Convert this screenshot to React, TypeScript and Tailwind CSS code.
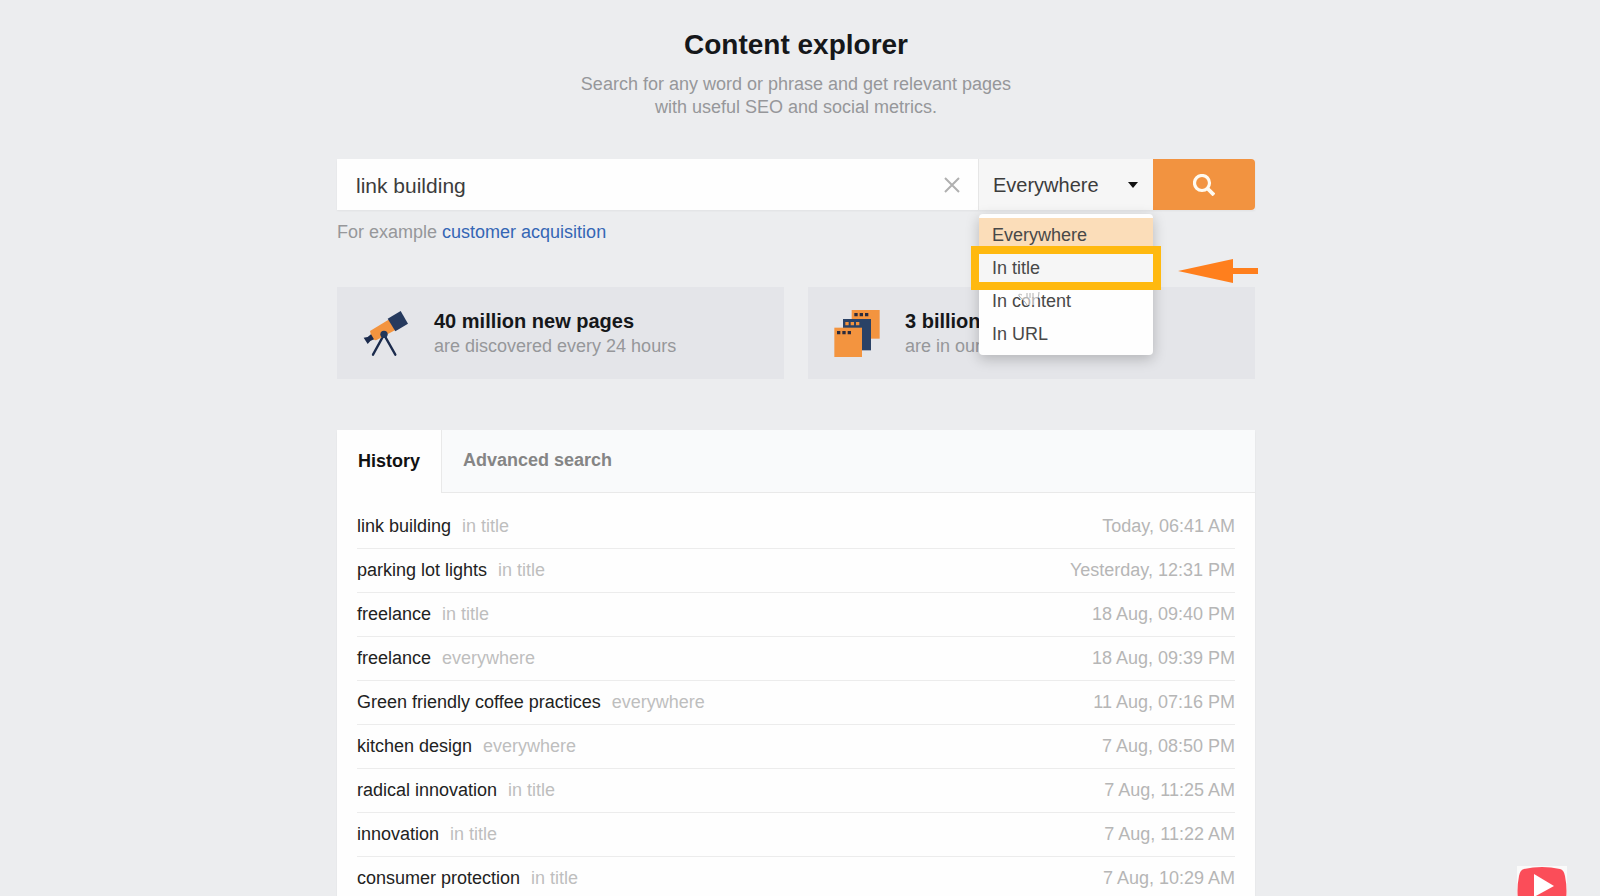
import { useState } from 'react'

const scopes = ['Everywhere', 'In title', 'In content', 'In URL']

const history = [
  { query: 'link building', scope: 'in title', date: 'Today, 06:41 AM' },
  { query: 'parking lot lights', scope: 'in title', date: 'Yesterday, 12:31 PM' },
  { query: 'freelance', scope: 'in title', date: '18 Aug, 09:40 PM' },
  { query: 'freelance', scope: 'everywhere', date: '18 Aug, 09:39 PM' },
  { query: 'Green friendly coffee practices', scope: 'everywhere', date: '11 Aug, 07:16 PM' },
  { query: 'kitchen design', scope: 'everywhere', date: '7 Aug, 08:50 PM' },
  { query: 'radical innovation', scope: 'in title', date: '7 Aug, 11:25 AM' },
  { query: 'innovation', scope: 'in title', date: '7 Aug, 11:22 AM' },
  { query: 'consumer protection', scope: 'in title', date: '7 Aug, 10:29 AM' },
]

function TelescopeIcon() {
  return (
    <svg viewBox="36 39 144 144" className="size-12 shrink-0" aria-hidden="true">
      <path d="M102 116 69 176M102 116l34 60" stroke="#1b2b4d" strokeWidth="7" strokeLinecap="round" />
      <path d="M60 105 118 70l18 32-56 30q-10 2-15-6z" fill="#f3943f" />
      <path d="M63 115 72 130 61 135 53 144 41 125 53 123z" fill="#1b2b4d" />
      <path d="m113 68 39-23 22 38-38 23z" fill="#263a5e" />
      <circle cx="102" cy="115" r="11" fill="#22375a" />
    </svg>
  )
}

function PagesIcon() {
  return (
    <svg viewBox="100 84 144 144" className="size-12 shrink-0" aria-hidden="true">
      <path d="M156 87h84v86h-84z" fill="#f3943f" />
      <path d="M164 96h10v10h-10zM180 96h10v10h-10zM196 96h10v10h-10z" fill="#2b2b3c" />
      <path d="M130 114h84v94h-84z" fill="#2a4266" />
      <path d="M137 123h10v10h-10zM153 123h10v10h-10zM169 123h10v10h-10z" fill="#f3943f" />
      <path d="M104 140h83v88h-83z" fill="#f3943f" />
      <path d="M112 150h10v10h-10zM128 150h10v10h-10zM144 150h10v10h-10z" fill="#2b2b3c" />
    </svg>
  )
}

function StatCard({ icon, title, text }: { icon: React.ReactNode; title: string; text: string }) {
  return (
    <div className="flex h-[92px] flex-1 items-center gap-6 bg-[#e4e5e9] pl-[25px]">
      {icon}
      <div className="min-w-0">
        <p className="text-xl leading-[26px] font-bold text-[#15171a]">{title}</p>
        <p className="text-lg leading-6 text-[#96979a]">{text}</p>
      </div>
    </div>
  )
}

export default function App() {
  const [query, setQuery] = useState('link building')
  const [scope, setScope] = useState('Everywhere')
  const [hovered, setHovered] = useState('In title')
  const [tab, setTab] = useState('History')

  return (
    <div className="relative h-screen overflow-hidden bg-[#ecedef] pr-2 font-['Liberation_Sans',Arial,sans-serif]">
      <main className="mx-auto w-full max-w-[918px]">
        <header className="pt-7 text-center">
          <h1 className="text-[28px] leading-[34px] font-bold text-[#15171a]">Content explorer</h1>
          <p className="mt-[11px] text-lg leading-[23px] text-[#96979a]">
            Search for any word or phrase and get relevant pages
            <br />
            with useful SEO and social metrics.
          </p>
        </header>

        <form className="relative mt-10 flex h-[51px] shadow-xs" onSubmit={(e) => e.preventDefault()}>
          <div className="flex flex-1 items-center bg-[#fefefe]">
            <input
              type="text"
              aria-label="Search query"
              value={query}
              onChange={(e) => setQuery(e.target.value)}
              className="h-full min-w-0 flex-1 bg-transparent pt-[2px] pl-[19px] text-[21px] text-[#3c3c3c] outline-none"
            />
            <button type="button" aria-label="Clear" onClick={() => setQuery('')} className="px-[18px]">
              <svg viewBox="0 0 16 16" className="size-4" stroke="#b0b0b0" strokeWidth="2" aria-hidden="true">
                <path d="m1 1 14 14M15 1 1 15" />
              </svg>
            </button>
          </div>

          <div className="relative w-[175px] border-l border-[#e6e6e6] bg-[#f6f6f6]">
            <select
              aria-label="Search scope"
              value={scope}
              onChange={(e) => setScope(e.target.value)}
              className="h-full w-full appearance-none bg-transparent pl-[14px] text-xl text-[#3c3c3c] outline-none"
            >
              {scopes.map((s) => (
                <option key={s}>{s}</option>
              ))}
            </select>
            <svg viewBox="0 0 12 6" className="pointer-events-none absolute top-[23px] right-[14px] h-[6px] w-3" aria-hidden="true">
              <path d="M1 0h10L6 6z" fill="#111" />
            </svg>

            <ul className="absolute top-[55px] right-0 left-0 z-10 rounded-sm bg-[#fefefe] pt-1 pb-[5px] shadow-[0_4px_14px_rgba(0,0,0,0.22)]">
              {scopes.map((s) => (
                <li key={s}>
                  <button
                    type="button"
                    onClick={() => setScope(s)}
                    onMouseEnter={() => setHovered(s)}
                    className={`block h-[33px] w-full pl-[13px] text-left text-lg text-[#484848] ${
                      s === scope ? 'bg-[#fbddb9]' : s === hovered ? 'bg-[#f6f6f6]' : ''
                    }`}
                  >
                    {s}
                  </button>
                </li>
              ))}
            </ul>

            {/* frame and arrow around the second option */}
            <div className="pointer-events-none absolute top-[87px] -right-2 -left-2 z-20 h-11 border-8 border-[#ffb90f]" />
            <svg viewBox="0 0 80 24" className="pointer-events-none absolute top-[100px] left-[199px] z-20 h-6 w-20" aria-hidden="true">
              <path d="M0 12 55 0v9h25v6H55v9z" fill="#ff7f1d" />
            </svg>
            <svg viewBox="0 0 24 28" className="pointer-events-none absolute top-[120px] left-[38px] z-10 h-7 w-6" aria-hidden="true">
              <path
                d="M5 16V4q2-4 4 0v8h10q3 0 3 3-1 6-4 11h-8q-2-4-8-9-1-3 3-1z"
                fill="#fefefe"
                fillOpacity="0.6"
              />
              <path d="M5 16q-4-2-3 1 6 5 8 9M22 13q0 5-2 7" fill="none" stroke="#b4b4b4" />
              <path d="M10 14v5M13 14v5M16 14v5" stroke="#b0b0b0" />
            </svg>
          </div>

          <button type="submit" aria-label="Search" className="flex w-[102px] items-center justify-center rounded-r bg-[#f29340]">
            <svg viewBox="0 0 22 22" className="size-[22px]" fill="none" stroke="#fffaf0" aria-hidden="true">
              <circle cx="9" cy="9" r="7.5" strokeWidth="3.2" />
              <path d="m14 14 7 7" strokeWidth="3.8" />
            </svg>
          </button>
        </form>

        <p className="mt-[10px] text-lg leading-6 text-[#96979a]">
          For example{' '}
          <a href="#" className="text-[#3566b5]">
            customer acquisition
          </a>
        </p>

        <section className="mt-[43px] flex gap-6">
          <StatCard icon={<TelescopeIcon />} title="40 million new pages" text="are discovered every 24 hours" />
          <StatCard icon={<PagesIcon />} title="3 billion pages" text="are in our database" />
        </section>

        <section className="mt-[51px] bg-[#fefefe] shadow-xs">
          <div className="flex h-[63px] bg-[#f9fafb]">
            {['History', 'Advanced search'].map((name) => (
              <button
                key={name}
                type="button"
                onClick={() => setTab(name)}
                className={`px-[21px] pb-[2px] text-lg font-bold ${
                  tab === name ? 'bg-[#fefefe] text-[#111]' : 'border-b border-l border-[#e9e9e9] text-[#858585]'
                }`}
              >
                {name}
              </button>
            ))}
            <div className="flex-1 border-b border-[#e9e9e9]" />
          </div>
          <div className="px-5 pt-[11px]">
            <table className="w-full text-lg">
              <tbody>
                {history.map((row) => (
                  <tr key={row.date} className="h-11 border-b border-[#ececec]">
                    <td className="text-[#222]">
                      {row.query}
                      <span className="ml-[11px] text-[#bebebe]">{row.scope}</span>
                    </td>
                    <td className="text-right text-[#b6b6b6]">{row.date}</td>
                  </tr>
                ))}
              </tbody>
            </table>
          </div>
        </section>
      </main>

      <a href="#" aria-label="Watch video" className="absolute right-[33px] -bottom-5 size-[50px] bg-[#fafafa]">
        <svg viewBox="0 0 50 50" className="size-full" aria-hidden="true">
          <path d="M7 3q18-4 36 0 4 1 5 7 3 15 0 30-1 6-5 7-18 4-36 0-4-1-5-7-3-15 0-30 1-6 5-7z" fill="#fb4d59" />
          <path d="M17 8v23l20-11z" fill="#fff" />
        </svg>
      </a>
    </div>
  )
}
